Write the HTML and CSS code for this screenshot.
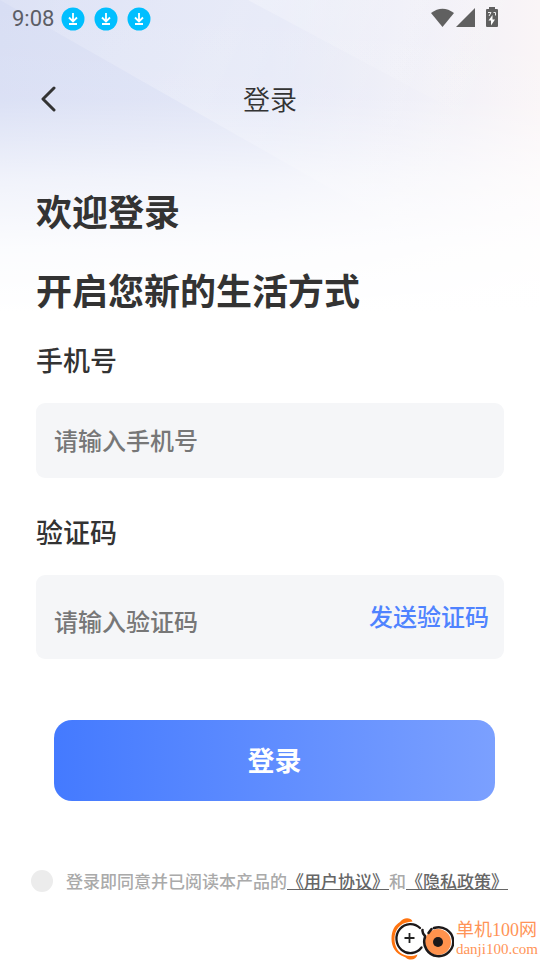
FILE: index.html
```html
<!DOCTYPE html>
<html lang="zh-CN">
<head>
<meta charset="utf-8">
<meta name="viewport" content="width=device-width, initial-scale=1">
<title>登录</title>
<link rel="stylesheet" href="styles.css">
</head>
<body>
<svg class="backdrop" viewBox="0 0 540 330" preserveAspectRatio="none" aria-hidden="true">
  <defs>
    <linearGradient id="base" x1="0" y1="0" x2="1" y2="0">
      <stop offset="0" stop-color="#d8def4"/>
      <stop offset=".5" stop-color="#e1e5f6"/>
      <stop offset=".8" stop-color="#f0eff7"/>
      <stop offset="1" stop-color="#faf5f7"/>
    </linearGradient>
    <linearGradient id="beam" gradientUnits="userSpaceOnUse" x1="0" y1="0" x2="500" y2="250">
      <stop offset="0" stop-color="#fff" stop-opacity=".12"/>
      <stop offset=".4" stop-color="#fff" stop-opacity=".25"/>
      <stop offset=".9" stop-color="#fff" stop-opacity="0"/>
    </linearGradient>
    <linearGradient id="fade" x1="0" y1="0" x2="0" y2="1">
      <stop offset="0" stop-color="#fff" stop-opacity="0"/>
      <stop offset=".3" stop-color="#fff" stop-opacity=".08"/>
      <stop offset=".42" stop-color="#fff" stop-opacity=".34"/>
      <stop offset=".54" stop-color="#fff" stop-opacity=".62"/>
      <stop offset=".75" stop-color="#fff" stop-opacity=".9"/>
      <stop offset=".95" stop-color="#fff"/>
    </linearGradient>
  </defs>
  <path fill="url(#base)" d="M0 0H540V330H0Z"/>
  <path fill="url(#beam)" d="M0 0H540V308Z"/>
  <path fill="url(#beam)" d="M248 0H540V156Z"/>
  <path fill="url(#fade)" d="M0 0H540V330H0Z"/>
</svg>
<svg class="sprite" aria-hidden="true">
  <symbol id="download" viewBox="0 0 24 24">
    <circle cx="12" cy="12" r="11.500" fill="#00bfff"/>
    <path d="M12 6V14M8 10.500l4 4 4-4M8 17h8" fill="none" stroke="#fff" stroke-width="1.800"/>
  </symbol>
</svg>

<header>
  <div class="status">
    <span class="time">9:08</span>
    <svg class="notice"><use href="#download"/></svg>
    <svg class="notice"><use href="#download"/></svg>
    <svg class="notice"><use href="#download"/></svg>
    <svg class="signals" viewBox="0 0 68 22" aria-hidden="true">
      <g fill="#606060">
        <path d="M0 5Q11.500-3.500 23 5L11.500 19Z"/>
        <path d="M25 19H44V0Z"/>
        <path d="M58-1h6v2h2q1 0 1 1v16q0 1-1 1h-10q-1 0-1-1v-16q0-1 1-1h2Z"/>
      </g>
      <path d="M61.500 7v4.500h2.500l-4 6v-5h-2.500Z" fill="#fff"/>
      <path d="M57 4.500h3l-2 3.500M62.500 4.500h2v3" fill="none" stroke="#eee"/>
    </svg>
  </div>
  <nav class="bar">
    <button class="back" type="button" aria-label="返回">
      <svg viewBox="0 0 16 26" aria-hidden="true"><path d="M14 2 3 13 14 24" fill="none" stroke="#333" stroke-width="3" stroke-linecap="round" stroke-linejoin="round"/></svg>
    </button>
    <span class="title">登录</span>
  </nav>
</header>

<main>
  <h1>欢迎登录</h1>
  <h1>开启您新的生活方式</h1>
  <form>
    <label class="name" for="phone">手机号</label>
    <div class="field"><input id="phone" type="tel" placeholder="请输入手机号"></div>
    <label class="name" for="code">验证码</label>
    <div class="field code">
      <input id="code" type="text" placeholder="请输入验证码">
      <button class="send" type="button">发送验证码</button>
    </div>
    <button class="submit" type="submit">登录</button>
    <div class="agree">
      <input id="agree" type="checkbox">
      <p><label for="agree">登录即同意并已阅读本产品的</label><a href="#terms">《用户协议》</a>和<a href="#privacy">《隐私政策》</a></p>
    </div>
  </form>
</main>

<footer>
  <svg class="logo" viewBox="0 0 64 44" aria-hidden="true">
    <path d="M10 6C13 1 21 1 22.500 5.500L19 6C10 7 4.500 14 4.500 23c0 8 4 14 10 16 4 1.500 8 1.500 13-.5-1 4-4 5.500-8 5-3-.5-3-2-6-3C6 38 1.500 31 1.500 23 1.500 14 5 9 10 6Z" fill="#ff7410"/>
    <path d="M31.500 31.500A14 14.500 0 1 1 30 12" fill="none" stroke="#1d191a" stroke-width="2.300" stroke-linecap="round"/>
    <circle cx="48" cy="26" r="13" fill="#ff924d"/>
    <path d="M44 12a14.500 14.500 0 1 1-9 9M32.500 14q-.5 3 2.500 6M38.500 17l3-4" fill="none" stroke="#1d191a" stroke-width="2.500" stroke-linecap="round"/>
    <circle cx="48" cy="26" r="5" fill="#1d191a"/>
    <path d="M19.500 17v10M14.500 22h10" stroke="#222" stroke-width="1.800"/>
  </svg>
  <div class="brand"><span>单机100网</span><span class="site">danji100.com</span></div>
</footer>
</body>
</html>
```
FILE: styles.css
```css
* { box-sizing: border-box; }

body {
  margin: 0;
  position: relative;
  min-height: 100vh;
  display: flex;
  flex-direction: column;
  background: #fff;
  color: #333;
  font-family: "Noto Sans CJK SC", sans-serif;
  font-weight: 500;
}

.backdrop {
  position: absolute;
  z-index: -1;
  top: 0;
  left: 0;
  width: 100%;
  height: 330px;
}

.sprite { position: absolute; width: 0; height: 0; }

button, input {
  font: inherit;
  color: inherit;
  border: 0;
  padding: 0;
  margin: 0;
  background: none;
}

.status {
  display: flex;
  align-items: center;
  gap: 9px;
  height: 37px;
  padding: 0 41px 0 12px;
}

.time {
  color: #5c5e66;
  font: 400 22px/24px Roboto, sans-serif;
  margin-right: -2px;
}

.notice { width: 24px; height: 24px; }
.signals { width: 68px; height: 22px; margin-left: auto; overflow: visible; }

.bar {
  display: grid;
  grid-template-columns: 1fr auto 1fr;
  align-items: center;
  height: 123px;
  padding: 0 40px;
}

.back { justify-self: start; display: flex; }
.back svg { width: 16px; height: 26px; }
.title { font-size: 27px; font-weight: 350; line-height: 40px; }

main { padding: 23px 36px 0; }

h1 {
  margin: 0 0 25px;
  font-size: 36px;
  font-weight: 700;
  line-height: 54px;
}

form { display: flex; flex-direction: column; margin-top: -1px; }

.name {
  align-self: flex-start;
  margin-bottom: 23px;
  font-size: 27px;
  line-height: 40px;
}

.field {
  display: flex;
  align-items: center;
  height: 75px;
  margin-bottom: 34px;
  padding: 0 15px 2px 18px;
  border-radius: 9px;
  background: #f5f6f8;
  font-size: 24px;
}

.field input { flex: 1; min-width: 0; height: 36px; outline: 0; }
.field input::placeholder { color: #777; opacity: 1; }

.code { align-items: flex-start; height: 84px; margin-bottom: 61px; padding-top: 23px; }
.code input { margin-top: 4px; }
.send { color: #4f83ff; line-height: 36px; }

.submit {
  height: 81px;
  margin: 0 9px 67px 18px;
  padding-bottom: 2px;
  border-radius: 18px;
  background: linear-gradient(90deg, #447aff, #7ba0ff);
  color: #fff;
  font-size: 27px;
  font-weight: 700;
}

.agree {
  display: flex;
  align-items: center;
  gap: 13px;
  margin: 0 -5px;
  color: #aaa;
  font-size: 17px;
  line-height: 26px;
}

.agree input {
  appearance: none;
  flex: none;
  width: 22px;
  height: 22px;
  border-radius: 50%;
  background: #ececec;
}

.agree input:checked { background: #447aff; }
.agree p { margin: 0; white-space: nowrap; }
.agree a { color: #666; }

footer {
  display: flex;
  justify-content: flex-end;
  gap: 2px;
  margin-top: auto;
  padding-right: 2px;
  color: #ff9457;
}

.logo { width: 64px; height: 44px; }
.brand {
  display: flex;
  flex-direction: column;
  font: 400 18px/20px "Liberation Serif", "Noto Sans CJK SC", serif;
  padding-top: 4px;
}
.site { font-size: 15px; line-height: 18px; }
```
